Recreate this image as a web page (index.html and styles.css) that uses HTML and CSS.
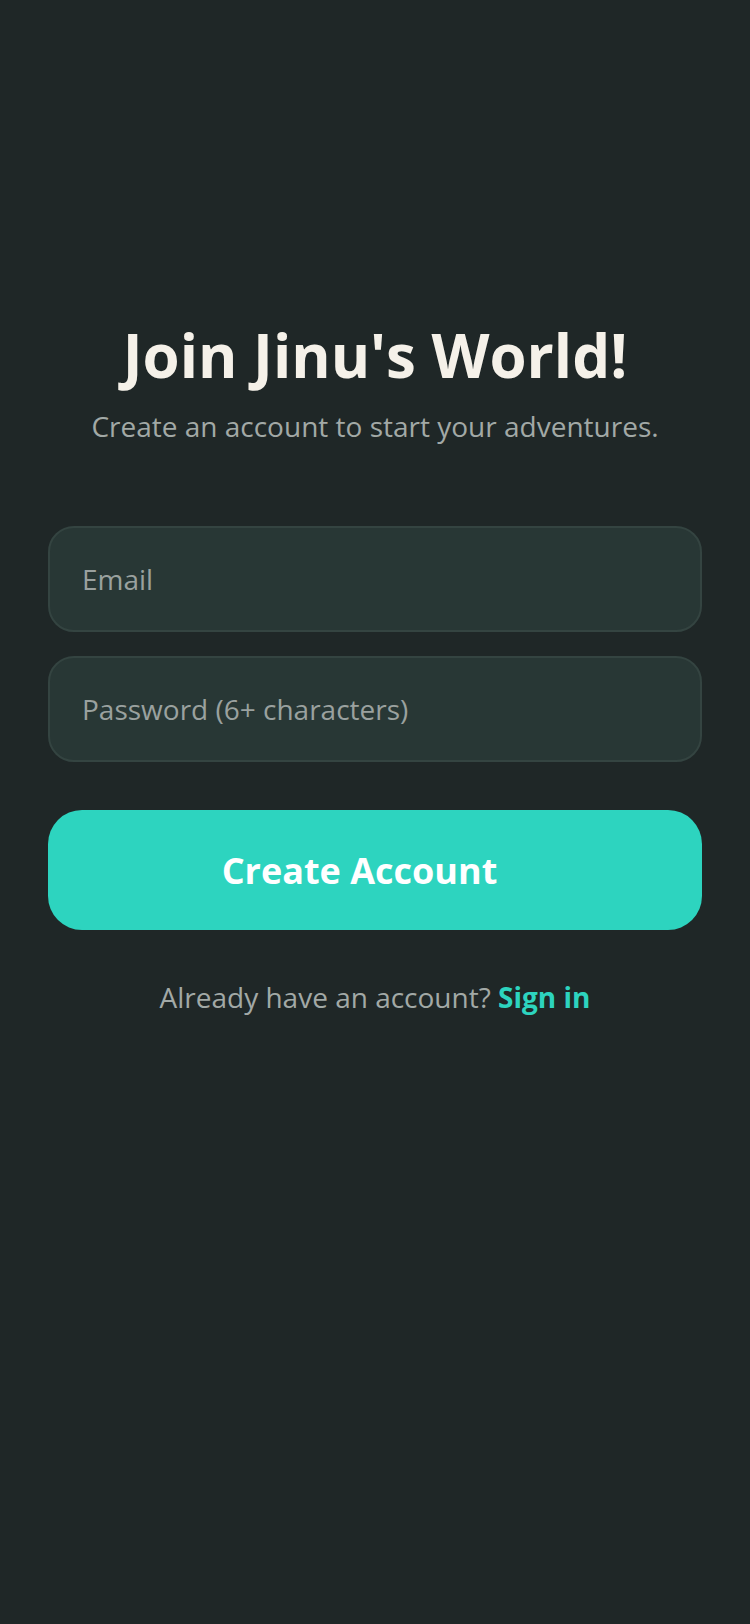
FILE: index.html
```html
<!DOCTYPE html>
<html lang="en">
<head>
    <meta charset="UTF-8">
    <meta name="viewport" content="width=device-width, initial-scale=1.0">
    <title>Join Jinu's World</title>
    <link rel="stylesheet" href="styles.css">
</head>
<body>
    <div class="container">
        <h1>Join Jinu's World!</h1>
        <p class="subtitle">Create an account to start your adventures.</p>

        <form class="signup-form">
            <input type="email" class="field" placeholder="Email">
            <input type="password" class="field" placeholder="Password (6+ characters)">
            <button type="button" class="submit">Create Account</button>
        </form>

        <p class="footer">Already have an account? <a href="#">Sign in</a></p>
    </div>
</body>
</html>
```

FILE: styles.css
```css
body {
    font-family: "Open Sans", "Noto Sans", sans-serif;
    background-color: #1f2727;
    margin: 0;
    min-height: 1624px;
}
.container {
    padding: 314px 48px 0;
    text-align: center;
}
h1 {
    font-size: 60px;
    font-weight: bold;
    color: #f5f1e9;
    margin: 0;
    line-height: 82px;
}
.subtitle {
    font-size: 28px;
    color: #a2a9a6;
    margin: 10px 0 0;
    line-height: 40px;
}
.signup-form {
    display: flex;
    flex-direction: column;
    gap: 24px;
    margin-top: 80px;
}
.field {
    height: 106px;
    padding: 0 32px;
    font-family: inherit;
    font-size: 28px;
    color: #f5f1e9;
    background-color: #283735;
    border: 2px solid #344441;
    border-radius: 26px;
    box-sizing: border-box;
    outline: none;
}
.field::placeholder {
    color: #9aa19f;
}
.submit {
    height: 120px;
    margin-top: 24px;
    padding: 0 31px 0 0; /* text sits a little left of centre */
    font-family: inherit;
    font-size: 36px;
    font-weight: bold;
    color: #fff;
    background-color: #2dd4bf;
    border: none;
    border-radius: 34px;
    cursor: pointer;
}
.footer {
    margin: 48px 0 0;
    font-size: 28px;
    color: #a2a9a6;
}
.footer a {
    color: #2dd4bf;
    font-weight: bold;
    text-decoration: none;
}
```
